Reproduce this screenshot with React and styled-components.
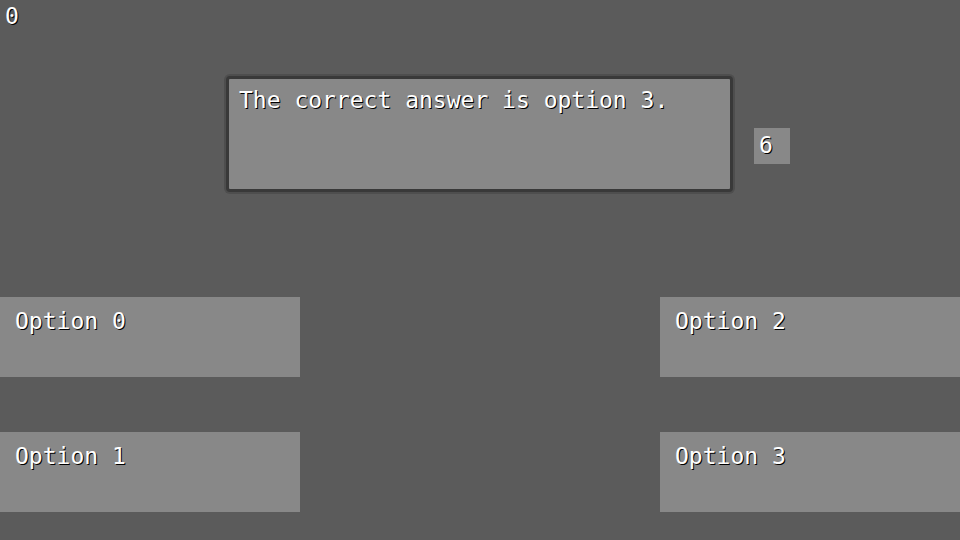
import React from "react";
import styled, { createGlobalStyle } from "styled-components";

const Global = createGlobalStyle`
  html, body { margin: 0; padding: 0; background: #5b5b5b; }
  body { font-family: "DejaVu Sans Mono", "Liberation Mono", monospace; }
`;

const Page = styled.div`
  width: 960px;
  height: 540px;
  overflow: hidden;
  background: #5b5b5b;
  display: flex;
  flex-direction: column;
`;

const PixelText = styled.span`
  font-family: "DejaVu Sans Mono", "Liberation Mono", monospace;
  font-size: 23px;
  line-height: 23px;
  color: #ffffff;
  text-shadow: 1px 1px 0 #000000;
  white-space: pre;
  letter-spacing: 0;
`;

const Score = styled.div`
  height: 30px;
  padding: 5px 0 0 5px;
  box-sizing: border-box;
`;

const TopRow = styled.div`
  margin-top: 46px;
  display: grid;
  grid-template-columns: 226px 507px 21px 36px;
  align-items: start;
`;

const Dialog = styled.div`
  grid-column: 2;
  height: 116px;
  box-sizing: border-box;
  background: #888888;
  border: 3px solid #393939;
  border-radius: 4px;
  box-shadow: 0 0 0 2px #4e4e4e;
  padding: 10px 0 0 10px;
`;

const Counter = styled.div`
  grid-column: 4;
  margin-top: 52px;
  width: 36px;
  height: 36px;
  box-sizing: border-box;
  background: #888888;
  padding: 6px 0 0 5px;
`;

const Options = styled.div`
  margin-top: 105px;
  display: grid;
  grid-template-columns: 300px 1fr 300px;
  grid-auto-rows: 80px;
  row-gap: 55px;
`;

const Option = styled.div`
  grid-column: ${(p) => p.$col};
  grid-row: ${(p) => p.$row};
  background: #888888;
  padding: 13px 0 0 15px;
  box-sizing: border-box;
`;

export default function App() {
  return (
    <>
      <Global />
      <Page>
        <Score>
          <PixelText>0</PixelText>
        </Score>
        <TopRow>
          <Dialog>
            <PixelText>The correct answer is option 3.</PixelText>
          </Dialog>
          <Counter>
            <PixelText>6</PixelText>
          </Counter>
        </TopRow>
        <Options>
          <Option $col={1} $row={1}>
            <PixelText>Option 0</PixelText>
          </Option>
          <Option $col={1} $row={2}>
            <PixelText>Option 1</PixelText>
          </Option>
          <Option $col={3} $row={1}>
            <PixelText>Option 2</PixelText>
          </Option>
          <Option $col={3} $row={2}>
            <PixelText>Option 3</PixelText>
          </Option>
        </Options>
      </Page>
    </>
  );
}
